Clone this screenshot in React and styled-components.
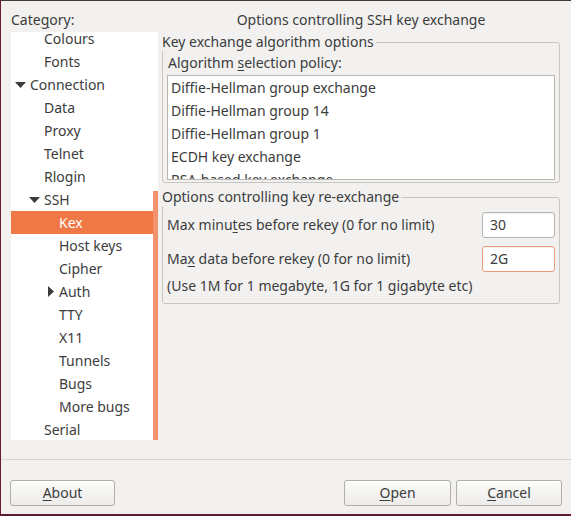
import styled, { createGlobalStyle } from "styled-components";

const GlobalStyle = createGlobalStyle`
  body {
    margin: 0;
    background: #f2f1f0;
    font-family: "Noto Sans", "DejaVu Sans", sans-serif;
    font-size: 14px;
    color: #3c3c3c;
  }
  * {
    box-sizing: border-box;
  }
`;

const Window = styled.div`
  width: 571px;
  height: 516px;
  display: flex;
  flex-direction: column;
  background: #f2f1f0;
  border-top: 1px solid #3c3b37;
  border-left: 1px solid #6a1b2e;
  border-bottom: 2px solid #5e1a35;
  overflow: hidden;
`;

const Main = styled.div`
  display: flex;
  gap: 4px;
  padding: 0 11px 0 10px;
`;

const Sidebar = styled.div`
  width: 147px;
  flex-shrink: 0;
  padding-top: 10px;
`;

const Caption = styled.div`
  line-height: 18px;
  height: 18px;
  margin-bottom: 3px;
  white-space: nowrap;
`;

const Key = styled.u`
  text-decoration-thickness: 1px;
  text-underline-offset: 2px;
`;

const Tree = styled.div`
  position: relative;
  height: 408px;
  background: #ffffff;
  overflow: hidden;
`;

const TreeList = styled.ul`
  list-style: none;
  margin: -5px 0 0;
  padding: 0;
`;

const indent = [3, 17, 32];

const TreeRow = styled.li`
  display: flex;
  align-items: center;
  height: 23px;
  padding-left: ${(p) => indent[p.$level]}px;
  background: ${(p) => (p.$selected ? "#f07746" : "transparent")};
  color: ${(p) => (p.$selected ? "#ffffff" : "#3c3c3c")};
  white-space: nowrap;
`;

const Expander = styled.span`
  width: 16px;
  flex-shrink: 0;
  display: flex;
  align-items: center;
  justify-content: ${(p) => (p.$open ? "flex-start" : "center")};
  padding-left: ${(p) => (p.$open ? "1px" : "0")};
`;

const ScrollThumb = styled.div`
  position: absolute;
  right: 0;
  top: 159px;
  bottom: 0;
  width: 5px;
  background: #f4936b;
`;

const Panel = styled.div`
  width: 398px;
  flex-shrink: 0;
  padding-top: 10px;
`;

const PanelTitle = styled.div`
  line-height: 18px;
  text-align: center;
`;

const Frame = styled.fieldset`
  margin: ${(p) => p.$gap}px 0 0;
  padding: 0 4px ${(p) => p.$bottom}px 5px;
  border: 1px solid #c9c6c2;
  border-radius: 3px;
  min-width: 0;
`;

const Legend = styled.legend`
  padding: 0 2px 0 0;
  margin-left: -6px;
  line-height: 18px;
  background: #f2f1f0;
`;

const FieldLabel = styled.div`
  line-height: 18px;
  margin-top: 3px;
`;

const ListBox = styled.ul`
  list-style: none;
  margin: 3px 0 0 -1px;
  padding: 0;
  height: 105px;
  background: #ffffff;
  border: 1px solid #b9b7b3;
  overflow: hidden;
`;

const ListItem = styled.li`
  height: 23px;
  line-height: 23px;
  padding-left: 3px;
  white-space: nowrap;
`;

const OptionRow = styled.div`
  display: flex;
  align-items: center;
  justify-content: space-between;
  height: 26px;
  margin-top: ${(p) => p.$gap}px;
`;

const OptionLabel = styled.span`
  margin-left: -1px;
  padding-bottom: 1px;
`;

const NumberField = styled.div`
  width: 73px;
  height: 26px;
  line-height: 24px;
  padding-left: 7px;
  background: #ffffff;
  border: 1px solid ${(p) => (p.$focused ? "#ec9a7c" : "#b7b4b0")};
  border-radius: 3px;
  box-shadow: inset 0 1px 1px rgba(0, 0, 0, 0.06);
`;

const Hint = styled.div`
  line-height: 18px;
  margin-top: 5px;
  margin-left: -1px;
`;

const Separator = styled.div`
  height: 1px;
  margin-top: 19px;
  background: #d8d6d2;
`;

const ButtonBar = styled.div`
  display: flex;
  gap: 5px;
  padding: 20px 9px 0;
`;

const Spacer = styled.div`
  flex: 1;
`;

const Button = styled.button`
  width: ${(p) => p.$w}px;
  height: 26px;
  padding: 0 0 1px;
  font: inherit;
  line-height: 22px;
  color: #3c3c3c;
  border: 1px solid #b1aea9;
  border-radius: 3px;
  background: linear-gradient(#fbfbfa, #eeecea);
  box-shadow: inset 0 1px 0 #ffffff;
`;

function Triangle({ open, color }) {
  return open ? (
    <svg width="11" height="6" viewBox="0 0 11 6">
      <path d="M0 0 H11 L5.5 6 Z" fill={color} />
    </svg>
  ) : (
    <svg width="6" height="11" viewBox="0 0 6 11">
      <path d="M0 0 L6 5.5 L0 11 Z" fill={color} />
    </svg>
  );
}

const treeItems = [
  { label: "Colours", level: 1 },
  { label: "Fonts", level: 1 },
  { label: "Connection", level: 0, expander: "open" },
  { label: "Data", level: 1 },
  { label: "Proxy", level: 1 },
  { label: "Telnet", level: 1 },
  { label: "Rlogin", level: 1 },
  { label: "SSH", level: 1, expander: "open" },
  { label: "Kex", level: 2, selected: true },
  { label: "Host keys", level: 2 },
  { label: "Cipher", level: 2 },
  { label: "Auth", level: 2, expander: "closed" },
  { label: "TTY", level: 2 },
  { label: "X11", level: 2 },
  { label: "Tunnels", level: 2 },
  { label: "Bugs", level: 2 },
  { label: "More bugs", level: 2 },
  { label: "Serial", level: 1 },
];

const algorithms = [
  "Diffie-Hellman group exchange",
  "Diffie-Hellman group 14",
  "Diffie-Hellman group 1",
  "ECDH key exchange",
  "RSA-based key exchange",
];

export default function App() {
  return (
    <>
      <GlobalStyle />
      <Window>
        <Main>
          <Sidebar>
            <Caption>
              Cate<Key>g</Key>ory:
            </Caption>
            <Tree>
              <TreeList>
                {treeItems.map((item) => (
                  <TreeRow
                    key={item.label}
                    $level={item.level}
                    $selected={item.selected}
                  >
                    <Expander $open={item.expander === "open"}>
                      {item.expander && (
                        <Triangle
                          open={item.expander === "open"}
                          color={item.selected ? "#fff" : "#3c3c3c"}
                        />
                      )}
                    </Expander>
                    {item.label}
                  </TreeRow>
                ))}
              </TreeList>
              <ScrollThumb />
            </Tree>
          </Sidebar>

          <Panel>
            <PanelTitle>Options controlling SSH key exchange</PanelTitle>

            <Frame $gap={4} $bottom={2}>
              <Legend>Key exchange algorithm options</Legend>
              <FieldLabel>
                Algorithm <Key>s</Key>election policy:
              </FieldLabel>
              <ListBox>
                {algorithms.map((a) => (
                  <ListItem key={a}>{a}</ListItem>
                ))}
              </ListBox>
            </Frame>

            <Frame $gap={5} $bottom={8}>
              <Legend>Options controlling key re-exchange</Legend>
              <OptionRow $gap={6}>
                <OptionLabel>
                  Max minu<Key>t</Key>es before rekey (0 for no limit)
                </OptionLabel>
                <NumberField>30</NumberField>
              </OptionRow>
              <OptionRow $gap={8}>
                <OptionLabel>
                  Ma<Key>x</Key> data before rekey (0 for no limit)
                </OptionLabel>
                <NumberField $focused>2G</NumberField>
              </OptionRow>
              <Hint>(Use 1M for 1 megabyte, 1G for 1 gigabyte etc)</Hint>
            </Frame>
          </Panel>
        </Main>

        <Separator />

        <ButtonBar>
          <Button $w={105}>
            <Key>A</Key>bout
          </Button>
          <Spacer />
          <Button $w={107}>
            <Key>O</Key>pen
          </Button>
          <Button $w={106}>
            <Key>C</Key>ancel
          </Button>
        </ButtonBar>
      </Window>
    </>
  );
}
